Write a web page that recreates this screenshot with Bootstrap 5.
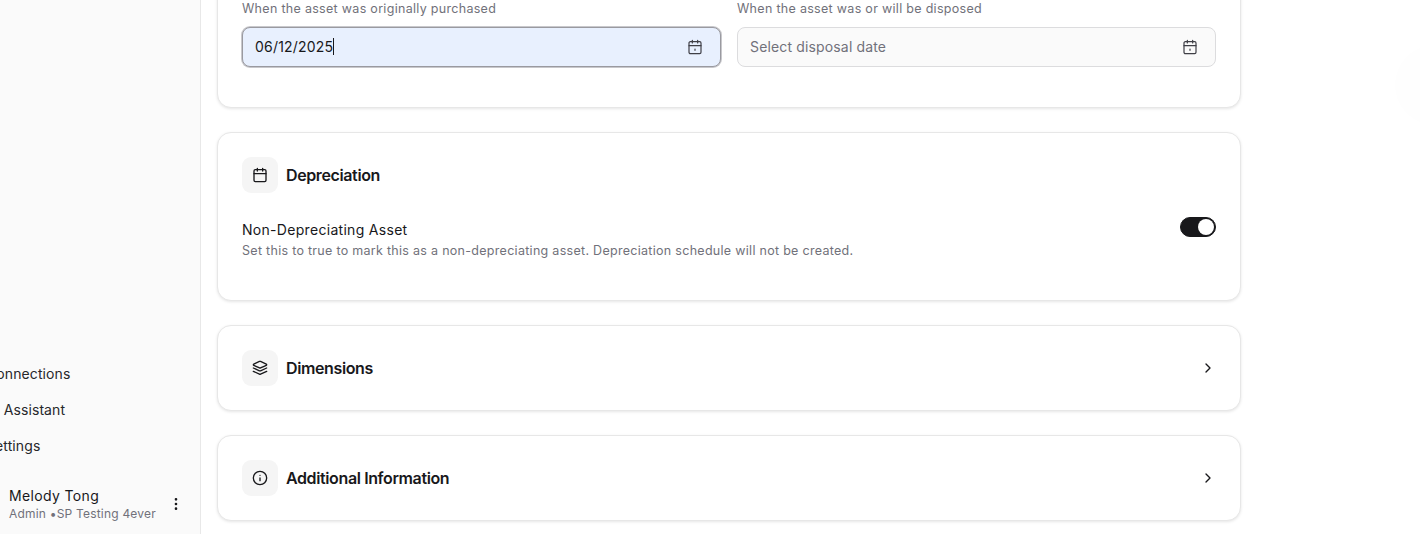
<!DOCTYPE html>
<html lang="en">
<head>
<meta charset="utf-8">
<title>Asset</title>
<link href="https://cdn.jsdelivr.net/npm/bootstrap@5.3.0/dist/css/bootstrap.min.css" rel="stylesheet">
<style>
html,body{height:534px;overflow:hidden;background:#fff;}
body{font-family:Inter,"Noto Sans",sans-serif;color:#18181b;font-size:14px;}
.app-shell{height:534px;overflow:hidden;position:relative;}
.side-rail{width:201px;flex:none;background:#fafafa;border-right:1px solid #e8e8e8;padding-bottom:12px;overflow:hidden;}
.side-item{height:36px;line-height:36px;margin-left:-14px;font-size:14px;letter-spacing:.1px;color:#27272a;white-space:nowrap;}
.side-user{margin-top:22px;padding-left:9px;padding-right:16px;}
.user-name{font-size:14px;line-height:20px;font-weight:400;letter-spacing:.36px;}
.user-sub{font-size:12px;line-height:16px;color:#71717a;letter-spacing:.2px;white-space:nowrap;}
.main-pane{width:1024px;margin-left:16px;flex:none;margin-top:-26px;}
.panel{border:1px solid #e7e7e7;border-radius:14px;box-shadow:0 1px 3px rgba(0,0,0,.1);padding:24px;margin-bottom:24px;background:#fff;}
.hint-text{font-size:12.5px;line-height:20px;color:#71717a;letter-spacing:.3px;margin-bottom:8px;}
.date-box{height:40px;border:1px solid #dcdcde;border-radius:8px;background:#fafafa;padding:0 17px 0 12px;color:#71717a;font-size:14px;letter-spacing:.15px;}
.date-box.is-focus{background:#e8f0fe;color:#18181b;border-color:#9a9aa0;box-shadow:0 0 0 1px #c8c8cc;letter-spacing:.2px;}
.date-text{padding-bottom:2px;}
.date-caret{display:inline-block;width:1px;height:17px;background:#18181b;vertical-align:-3px;}
.head-icon{width:36px;height:36px;background:#f5f5f5;border-radius:9px;color:#18181b;flex:none;}
.panel-title{font-size:16px;font-weight:600;line-height:24px;margin:0;letter-spacing:-.38px;}
.form-stack{padding-bottom:16px;}
.toggle-row{padding-top:3px;padding-bottom:16px;margin-top:24px;}
.toggle-label{font-size:14px;line-height:20px;font-weight:400;letter-spacing:.3px;}
.toggle-desc{font-size:12.5px;line-height:18px;margin-top:2px;color:#71717a;letter-spacing:.29px;}
.switch-wrap{padding:0;margin:-3px 0 0;min-height:0;height:20px;}
.switch-wrap .form-check-input{width:36px;height:20px;margin:0;float:none;display:block;background-color:#18181b;border:1px solid #18181b;box-shadow:none;}
.switch-wrap .form-check-input:checked{background-image:url("data:image/svg+xml,%3csvg xmlns='http://www.w3.org/2000/svg' viewBox='-4 -4 8 8'%3e%3ccircle r='3.55' fill='%23fff'/%3e%3c/svg%3e");background-position:right center;}
.glow-blob{position:absolute;right:-55px;top:45px;width:80px;height:80px;border-radius:50%;background:#fefefe;}
</style>
</head>
<body>
<div class="app-shell d-flex">
  <aside class="side-rail d-flex flex-column justify-content-end">
    <div class="side-item">Connections</div>
    <div class="side-item">AI Assistant</div>
    <div class="side-item">Settings</div>
    <div class="side-user d-flex align-items-center justify-content-between">
      <div>
        <div class="user-name">Melody Tong</div>
        <div class="user-sub">Admin •SP Testing 4ever</div>
      </div>
      <svg width="16" height="16" viewBox="0 0 24 24" fill="#18181b" stroke="#18181b" stroke-width="2"><circle cx="12" cy="5" r="1"/><circle cx="12" cy="12" r="1"/><circle cx="12" cy="19" r="1"/></svg>
    </div>
  </aside>
  <main class="main-pane">
    <section class="panel">
      <div class="form-stack d-flex gap-3">
        <div class="flex-fill w-50">
          <div class="hint-text">When the asset was originally purchased</div>
          <div class="date-box is-focus d-flex align-items-center justify-content-between">
            <span class="date-text">06/12/2025<span class="date-caret"></span></span>
            <svg width="16" height="16" viewBox="0 0 24 24" fill="none" stroke="#3f3f46" stroke-width="1.8" stroke-linecap="round" stroke-linejoin="round"><path d="M8 2v4M16 2v4"/><rect x="3" y="4" width="18" height="18" rx="2"/><path d="M3 10h18M12 15v2"/></svg>
          </div>
        </div>
        <div class="flex-fill w-50">
          <div class="hint-text">When the asset was or will be disposed</div>
          <div class="date-box d-flex align-items-center justify-content-between">
            <span class="date-text">Select disposal date</span>
            <svg width="16" height="16" viewBox="0 0 24 24" fill="none" stroke="#3f3f46" stroke-width="1.8" stroke-linecap="round" stroke-linejoin="round"><path d="M8 2v4M16 2v4"/><rect x="3" y="4" width="18" height="18" rx="2"/><path d="M3 10h18M12 15v2"/></svg>
          </div>
        </div>
      </div>
    </section>
    <section class="panel">
      <div class="d-flex align-items-center gap-2">
        <div class="head-icon d-flex align-items-center justify-content-center">
          <svg width="16" height="16" viewBox="0 0 24 24" fill="none" stroke="currentColor" stroke-width="2" stroke-linecap="round" stroke-linejoin="round"><path d="M8 2v4M16 2v4"/><rect x="3" y="4" width="18" height="18" rx="2"/><path d="M3 10h18"/></svg>
        </div>
        <h2 class="panel-title">Depreciation</h2>
      </div>
      <div class="toggle-row d-flex justify-content-between align-items-start">
        <div>
          <div class="toggle-label">Non-Depreciating Asset</div>
          <div class="toggle-desc">Set this to true to mark this as a non-depreciating asset. Depreciation schedule will not be created.</div>
        </div>
        <div class="form-check form-switch switch-wrap">
          <input class="form-check-input" type="checkbox" role="switch" checked aria-label="Non-Depreciating Asset">
        </div>
      </div>
    </section>
    <section class="panel d-flex align-items-center justify-content-between">
      <div class="d-flex align-items-center gap-2">
        <div class="head-icon d-flex align-items-center justify-content-center">
          <svg width="16" height="16" viewBox="0 0 24 24" fill="none" stroke="currentColor" stroke-width="2" stroke-linecap="round" stroke-linejoin="round"><path d="M12.83 2.18a2 2 0 0 0-1.66 0L2.6 6.08a1 1 0 0 0 0 1.83l8.58 3.91a2 2 0 0 0 1.66 0l8.58-3.9a1 1 0 0 0 0-1.83Z"/><path d="m22 12-9.17 4.17a2 2 0 0 1-1.66 0L2 12"/><path d="m22 17-9.17 4.17a2 2 0 0 1-1.66 0L2 17"/></svg>
        </div>
        <h2 class="panel-title">Dimensions</h2>
      </div>
      <svg width="16" height="16" viewBox="0 0 24 24" fill="none" stroke="#18181b" stroke-width="2" stroke-linecap="round" stroke-linejoin="round"><path d="m9 18 6-6-6-6"/></svg>
    </section>
    <section class="panel d-flex align-items-center justify-content-between">
      <div class="d-flex align-items-center gap-2">
        <div class="head-icon d-flex align-items-center justify-content-center">
          <svg width="16" height="16" viewBox="0 0 24 24" fill="none" stroke="currentColor" stroke-width="2" stroke-linecap="round" stroke-linejoin="round"><circle cx="12" cy="12" r="10"/><path d="M12 16v-4M12 8h.01"/></svg>
        </div>
        <h2 class="panel-title">Additional Information</h2>
      </div>
      <svg width="16" height="16" viewBox="0 0 24 24" fill="none" stroke="#18181b" stroke-width="2" stroke-linecap="round" stroke-linejoin="round"><path d="m9 18 6-6-6-6"/></svg>
    </section>
  </main>
  <div class="glow-blob"></div>
</div>
<script src="https://cdn.jsdelivr.net/npm/bootstrap@5.3.0/dist/js/bootstrap.bundle.min.js"></script>
</body>
</html>
